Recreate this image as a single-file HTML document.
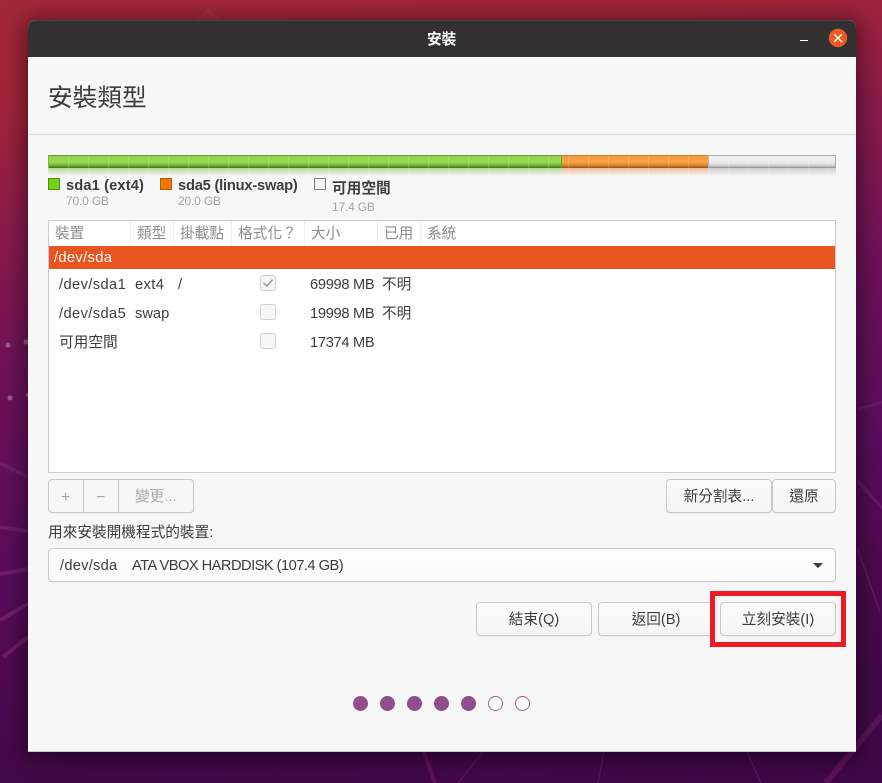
<!DOCTYPE html>
<html lang="zh-Hant"><head><meta charset="utf-8"><title>安裝</title>
<style>
html,body{margin:0;padding:0}
body{width:882px;height:783px;position:relative;overflow:hidden;background:linear-gradient(172deg,#a3263a 0%,#a02438 12%,#8a1b4a 25%,#6d1158 42%,#580c5c 62%,#450849 85%,#3f0747 100%);font-family:"Liberation Sans","Noto Sans CJK TC",sans-serif;font-size:14.67px;color:#3d3d3d}
svg.bg{position:absolute;left:0;top:0}
#win{position:absolute;left:28px;top:20px;width:828px;height:732px;background:#f7f7f7;border-radius:8px 8px 0 0;box-shadow:0 3px 22px 3px rgba(0,0,0,.5);border-bottom:1px solid #c9c9c9;box-sizing:border-box}
#hd{position:absolute;left:28px;top:20px;width:828px;height:37px;background:#323030;border-radius:8px 8px 0 0;border-top:1px solid #454343;box-sizing:border-box}
.t{position:absolute;white-space:nowrap;line-height:20px}
.box{position:absolute;box-sizing:border-box}
.btn{position:absolute;box-sizing:border-box;background:linear-gradient(#fbfbfb,#f5f5f5);border:1px solid #c8c8c8;border-radius:4px;text-align:center;line-height:34px;height:34px;white-space:nowrap;color:#3d3d3d;box-shadow:0 1px 0 rgba(0,0,0,.04)}
.seg{position:absolute;height:13px;top:155px;box-sizing:border-box}
.ref{position:absolute;height:8px;top:168px}
.ticks{position:absolute;left:48px;top:155px;width:788px;height:21px;background:repeating-linear-gradient(90deg,rgba(255,255,255,.15) 0 1px,transparent 1px 20px)}
.cb{position:absolute;left:260px;width:16px;height:16px;box-sizing:border-box;border:1px solid #cfcfcf;border-radius:3px;background:#f6f6f6}
.h{color:#8c8c8c;top:224px}
.sep{position:absolute;top:221px;width:1px;height:25px;background:#f0f0f0}
.d{position:absolute;width:15px;height:15px;border-radius:50%;background:#924e8c;top:696px;box-sizing:border-box}
.o{background:#fff;border:1.5px solid #a45a9e}
.s{font-size:12px;color:#a3a3a3;letter-spacing:-.2px}
.mb{letter-spacing:-.3px}
</style></head><body>
<svg class="bg" width="882" height="783" viewBox="0 0 882 783">
<g fill="none" stroke="#6f1c69" stroke-linecap="butt">
<path d="M0 463L28 477" stroke-width="4"/>
<path d="M0 527L28 531" stroke-width="4"/>
<path d="M0 574L28 569" stroke-width="4"/>
<path d="M0 620L28 604" stroke-width="4"/>
<path d="M3 657L28 637" stroke-width="4"/>
<path d="M857 410L882 402" stroke-width="3" stroke="#681966"/>
<path d="M857 480L882 508" stroke-width="3" stroke="#681966"/>
<path d="M858 550L880 612" stroke-width="1.5" stroke="#681966"/>
<path d="M826 783L882 715" stroke-width="6" stroke="#5b125c"/>
<path d="M424 752L435 783" stroke-width="4" stroke="#5b125c"/>
<path d="M483 752L458 783" stroke-width="1.5" stroke="#5b125c"/>
<path d="M604 752L598 783" stroke-width="1.5" stroke="#5b125c"/>
<path d="M747 752L761 783" stroke-width="1.5" stroke="#5b125c"/>
</g>
<g fill="#9c5a96"><circle cx="8" cy="345" r="2.5"/><circle cx="26" cy="342" r="2.5"/><circle cx="10" cy="398" r="2.5"/><circle cx="28" cy="395" r="2"/></g>
<path d="M196 20L208 8L221 20Z" fill="#a62c42"/>
</svg>
<div id="win"></div>
<div id="hd"></div>
<div class="t" style="left:427px;top:30px;color:#fff;font-weight:bold">安裝</div>
<div class="box" style="left:800px;top:40px;width:8px;height:1px;background:#fff"></div>
<svg style="position:absolute;left:828px;top:28px" width="20" height="20" viewBox="0 0 20 20"><circle cx="10" cy="10" r="9.2" fill="#ee5a22"/><path d="M6.2 6.2L13.8 13.8M13.8 6.2L6.2 13.8" stroke="#fff" stroke-width="1.4" fill="none"/></svg>

<div class="t" style="left:48px;top:82px;font-size:24.67px;line-height:34px">安裝類型</div>
<div class="box" style="left:28px;top:134px;width:828px;height:1px;background:#dcdcdc"></div>

<div class="seg" style="left:48px;width:514px;border:1px solid #6aa52a;border-bottom:0;background:linear-gradient(#8ed14c,#9ada54 50%,#7fbf40 72%,#55911f 90%,#3f7012)"></div>
<div class="seg" style="left:562px;width:146px;border-top:1px solid #d9801f;background:linear-gradient(#f59a3e,#f7a14a 50%,#e88f34 72%,#b86a1c 90%,#8a4c10)"></div>
<div class="seg" style="left:708px;width:128px;border:1px solid #a8a8a8;border-bottom:0;background:linear-gradient(#f0f0f0,#ececec 50%,#dcdcdc 72%,#b4b4b4 90%,#8c8c8c)"></div>
<div class="ref" style="left:48px;width:514px;background:linear-gradient(rgba(120,190,60,.55),rgba(120,190,60,0))"></div>
<div class="ref" style="left:562px;width:146px;background:linear-gradient(rgba(225,140,70,.55),rgba(225,140,70,0))"></div>
<div class="ref" style="left:708px;width:128px;background:linear-gradient(rgba(170,170,170,.55),rgba(170,170,170,0))"></div>
<div class="ticks"></div>

<div class="box" style="left:48px;top:178px;width:12px;height:12px;background:#73d216;border:1px solid #4f8f12"></div>
<div class="t" style="left:66px;top:176px;font-weight:bold;letter-spacing:.13px">sda1 (ext4)</div>
<div class="t s" style="left:66px;top:191px">70.0 GB</div>
<div class="box" style="left:160px;top:178px;width:12px;height:12px;background:#f57900;border:1px solid #b45c0a"></div>
<div class="t" style="left:178px;top:176px;font-weight:bold;letter-spacing:-.2px">sda5 (linux-swap)</div>
<div class="t s" style="left:178px;top:191px">20.0 GB</div>
<div class="box" style="left:314px;top:178px;width:12px;height:12px;background:#f2f2f2;border:1px solid #7e7e7e"></div>
<div class="t" style="left:332px;top:179px;font-weight:bold">可用空間</div>
<div class="t s" style="left:332px;top:197px">17.4 GB</div>

<div class="box" style="left:48px;top:220px;width:788px;height:253px;background:#fff;border:1px solid #cdcdcd"></div>
<div class="sep" style="left:130px"></div><div class="sep" style="left:173px"></div><div class="sep" style="left:231px"></div><div class="sep" style="left:304px"></div><div class="sep" style="left:377px"></div><div class="sep" style="left:420px"></div>
<div class="t h" style="left:55px">裝置</div>
<div class="t h" style="left:137px">類型</div>
<div class="t h" style="left:180px">掛載點</div>
<div class="t h" style="left:238px">格式化？</div>
<div class="t h" style="left:311px">大小</div>
<div class="t h" style="left:384px">已用</div>
<div class="t h" style="left:427px">系統</div>
<div class="box" style="left:49px;top:246px;width:786px;height:23px;background:#e95420"></div>
<div class="t" style="left:54px;top:248px;color:#fff;letter-spacing:.35px">/dev/sda</div>

<div class="t" style="left:59px;top:275px;letter-spacing:.4px">/dev/sda1</div>
<div class="t" style="left:135px;top:275px;letter-spacing:.4px">ext4</div>
<div class="t" style="left:178px;top:275px">/</div>
<div class="cb" style="top:275px"></div>
<svg style="position:absolute;left:260px;top:275px" width="16" height="16" viewBox="0 0 16 16"><path d="M3.5 8L6.8 11L12.5 4.8" fill="none" stroke="#9a9a9a" stroke-width="1.6"/></svg>
<div class="t mb" style="left:310px;top:275px">69998 MB</div>
<div class="t" style="left:382px;top:275px">不明</div>

<div class="t" style="left:59px;top:304px;letter-spacing:.4px">/dev/sda5</div>
<div class="t" style="left:135px;top:304px">swap</div>
<div class="cb" style="top:304px"></div>
<div class="t mb" style="left:310px;top:304px">19998 MB</div>
<div class="t" style="left:382px;top:304px">不明</div>

<div class="t" style="left:59px;top:333px">可用空間</div>
<div class="cb" style="top:333px"></div>
<div class="t mb" style="left:310px;top:333px">17374 MB</div>

<div class="btn" style="left:48px;top:479px;width:146px;background:#f7f7f7"></div>
<div class="box" style="left:83px;top:480px;width:1px;height:32px;background:#c8c8c8"></div>
<div class="box" style="left:118px;top:480px;width:1px;height:32px;background:#c8c8c8"></div>
<div class="t" style="left:61px;top:488px;color:#a8a8a8;font-size:16px">+</div>
<div class="t" style="left:96px;top:488px;color:#a8a8a8;font-size:16px">−</div>
<div class="t" style="left:135px;top:487px;color:#aaa">變更...</div>

<div class="btn" style="left:666px;top:479px;width:106px">新分割表...</div>
<div class="btn" style="left:772px;top:479px;width:64px">還原</div>

<div class="t" style="left:48px;top:523px">用來安裝開機程式的裝置:</div>

<div class="btn" style="left:48px;top:548px;width:788px;background:linear-gradient(#fdfdfd,#f9f9f9)"></div>
<div class="t" style="left:60px;top:556px;letter-spacing:.25px">/dev/sda</div>
<div class="t" style="left:132px;top:556px;letter-spacing:-.53px">ATA VBOX HARDDISK (107.4 GB)</div>
<svg style="position:absolute;left:812px;top:561px" width="12" height="9" viewBox="0 0 12 9"><path d="M1 2H11L6 7.2Z" fill="#3d3d3d"/></svg>

<div class="btn" style="left:476px;top:602px;width:116px">結束(Q)</div>
<div class="btn" style="left:598px;top:602px;width:116px">返回(B)</div>
<div class="btn" style="left:720px;top:602px;width:116px">立刻安裝(I)</div>
<div class="box" style="left:710px;top:591px;width:136px;height:56px;border:5px solid #ed1c24"></div>

<div class="d" style="left:353px"></div><div class="d" style="left:380px"></div><div class="d" style="left:407px"></div><div class="d" style="left:434px"></div><div class="d" style="left:461px"></div><div class="d o" style="left:488px"></div><div class="d o" style="left:515px"></div>
</body></html>
